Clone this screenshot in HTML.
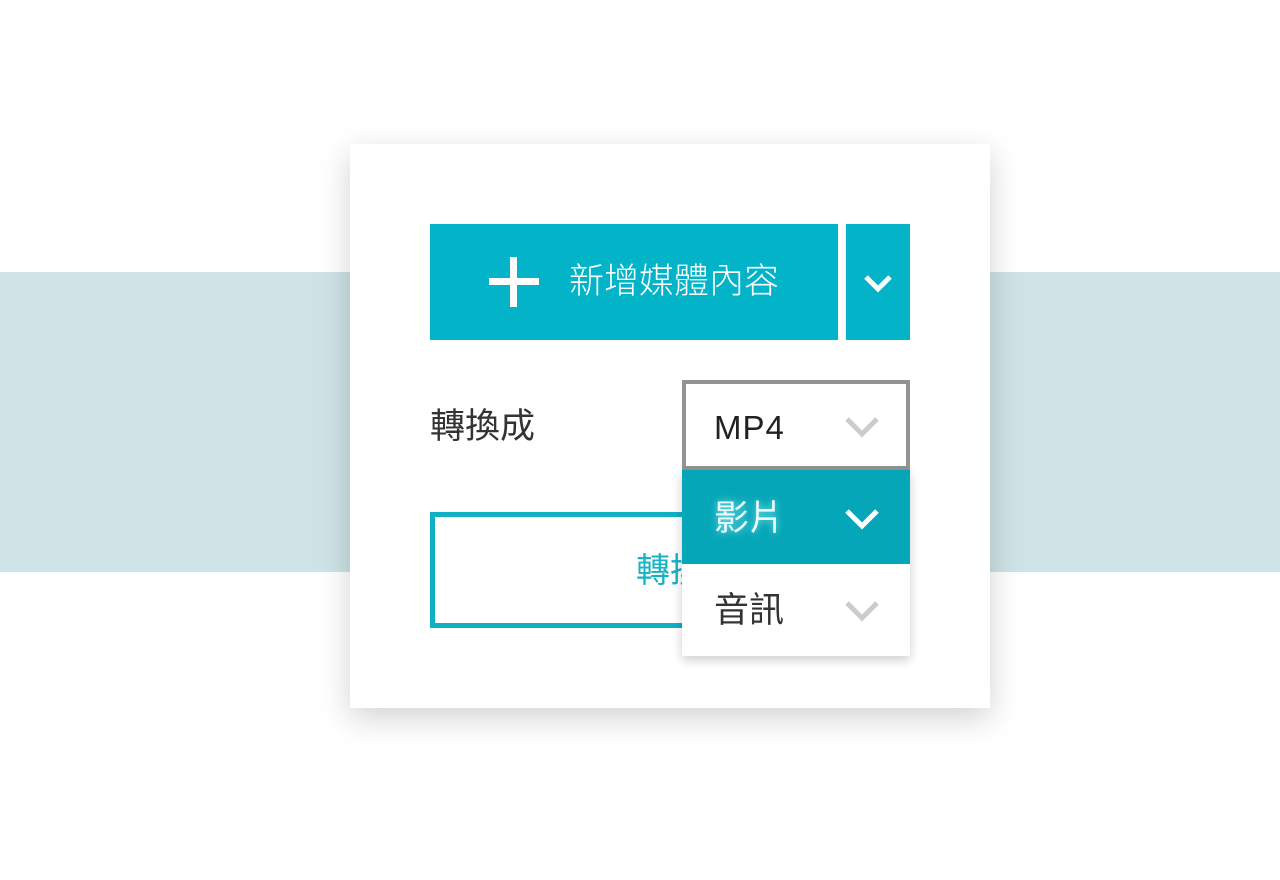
<!DOCTYPE html>
<html><head><meta charset="utf-8"><style>
body{margin:0;width:1280px;height:880px;background:#fff;position:relative;overflow:hidden;font-family:"Liberation Sans","Noto Sans CJK TC",sans-serif}
.band{position:absolute;left:0;top:272px;width:1280px;height:300px;background:#cde3e5}
.card{position:absolute;left:350px;top:144px;width:640px;height:564px;background:#fff;box-shadow:0 10px 30px rgba(0,0,0,.18)}
.a{position:absolute}
</style></head><body>
<div class="band"></div>
<div class="card"></div>
<div class="a" style="left:430px;top:224px;width:408px;height:116px;background:#03b4c9"></div>
<div class="a" style="left:489px;top:278px;width:50px;height:7px;background:#fff"></div>
<div class="a" style="left:510px;top:257px;width:7px;height:50px;background:#fff"></div>
<div class="a" style="left:569px;top:258px;color:#fff;font-size:35px;line-height:48px;font-weight:300">新增媒體內容</div>
<div class="a" style="left:846px;top:224px;width:64px;height:116px;background:#03b4c9"></div>
<svg class="a" style="left:862px;top:272px" width="32" height="24"><path d="M4 5 L16 17 L28 5" stroke="#fff" stroke-width="5" fill="none"/></svg>
<div class="a" style="left:430px;top:404px;color:#333;font-size:35px;line-height:46px">轉換成</div>
<div class="a" style="left:430px;top:512px;width:420px;height:106px;border:5px solid #0fb0c4"></div>
<div class="a" style="left:636px;top:548px;color:#18b2c5;font-size:34px;line-height:46px">轉換</div>
<div class="a" style="left:682px;top:380px;width:220px;height:82px;border:4px solid #939393;background:#fff"></div>
<div class="a" style="left:714px;top:406px;color:#222;font-size:33px;line-height:44px;letter-spacing:1px">MP4</div>
<svg class="a" style="left:844px;top:415px" width="36" height="26"><path d="M3 4 L18 19 L33 4" stroke="#ccc" stroke-width="5" fill="none"/></svg>
<div class="a" style="left:682px;top:470px;width:228px;height:186px;background:#fff;box-shadow:0 4px 10px rgba(0,0,0,.2)"></div>
<div class="a" style="left:682px;top:470px;width:228px;height:94px;background:#05a6b8"></div>
<div class="a" style="left:714px;top:496px;color:#eafcff;font-size:35px;line-height:46px;text-shadow:0 0 8px rgba(180,255,255,.8)">影片</div>
<svg class="a" style="left:844px;top:507px" width="36" height="26"><path d="M3 4 L18 19 L33 4" stroke="#fff" stroke-width="5" fill="none"/></svg>
<div class="a" style="left:714px;top:588px;color:#333;font-size:35px;line-height:46px">音訊</div>
<svg class="a" style="left:844px;top:599px" width="36" height="26"><path d="M3 4 L18 19 L33 4" stroke="#ccc" stroke-width="5" fill="none"/></svg>
</body></html>
